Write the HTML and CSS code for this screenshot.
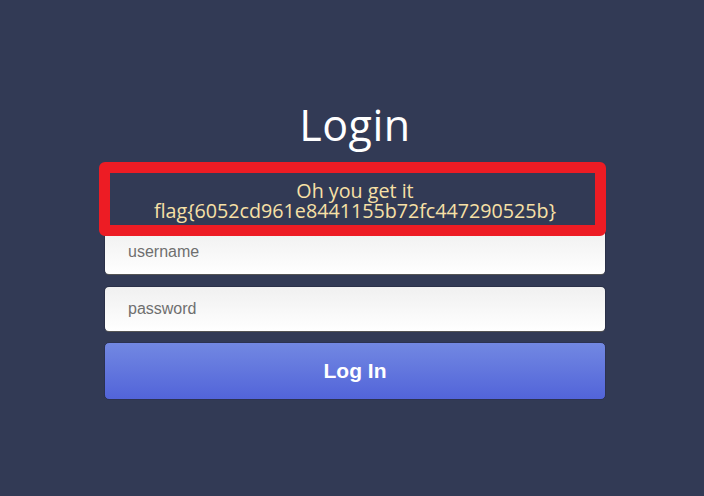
FILE: index.html
```html
<!DOCTYPE html>
<html>
<head>
<meta charset="utf-8">
<link rel="stylesheet" href="styles.css">
</head>
<body>
<div class="login">
  <h1 class="title">Login</h1>
  <div class="message">
    <div>Oh you get it</div>
    <div>flag{6052cd961e8441155b72fc447290525b}</div>
  </div>
  <form class="form">
    <input class="field" type="text" placeholder="username">
    <input class="field" type="password" placeholder="password">
    <button class="btn" type="button">Log In</button>
  </form>
  <div class="highlight"></div>
</div>
</body>
</html>
```
FILE: styles.css
```css
html, body {
  margin: 0;
  padding: 0;
  height: 100%;
}
body {
  background: #323a55;
  font-family: "Open Sans", "Noto Sans", sans-serif;
}
.login {
  position: relative;
  width: 502px;
  margin-left: 104px;
  padding-top: 96px;
}
.title {
  margin: 0;
  font-weight: 400;
  font-size: 43px;
  line-height: 58px;
  color: #ffffff;
  text-align: center;
  letter-spacing: 0.5px;
}
.message {
  margin-top: 19px;
  height: 52px;
  color: #f7e0a6;
  font-size: 19.7px;
  line-height: 20px;
  text-align: center;
  padding-top: 8px;
  box-sizing: border-box;
}
.highlight {
  position: absolute;
  left: -5px;
  width: 507px;
  top: 162px;
  height: 74px;
  box-sizing: border-box;
  border: 11px solid #ed1c24;
  border-radius: 6px;
}
.form {
  display: flex;
  flex-direction: column;
  gap: 11px;
  margin-top: 4px;
}
.field {
  height: 46px;
  box-sizing: border-box;
  border: 1px solid #2a3048;
  border-bottom-color: #555;
  border-radius: 5px;
  background: linear-gradient(#f0f0f0, #ffffff);
  padding: 0 23px;
  font-family: "Liberation Sans", Arial, sans-serif;
  font-size: 16px;
  color: #333;
  outline: none;
}
.field::placeholder {
  color: #6f6f6f;
}
.btn {
  height: 58px;
  margin-top: -1px;
  border: 1px solid #2c3250;
  border-radius: 5px;
  background: linear-gradient(#7288e2, #5264d9);
  color: #ffffff;
  font-family: "Liberation Sans", Arial, sans-serif;
  font-weight: 700;
  font-size: 21px;
  cursor: pointer;
}
```
